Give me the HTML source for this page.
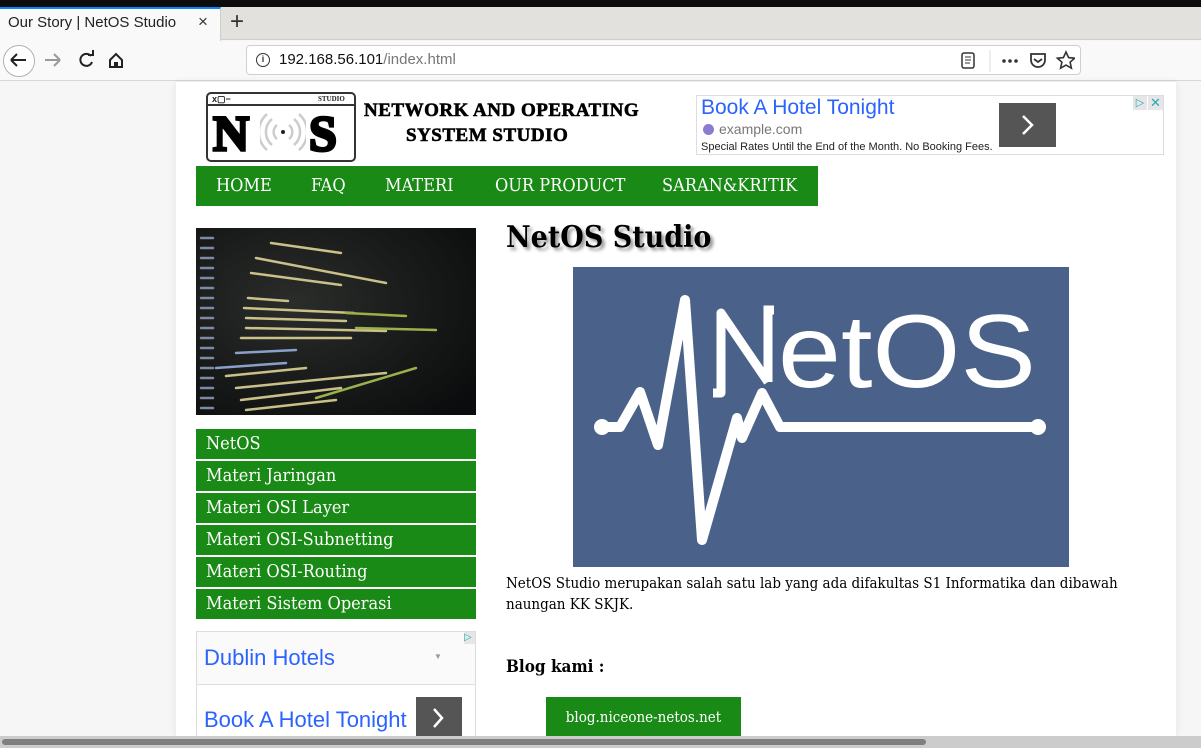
<!DOCTYPE html>
<html><head><meta charset="utf-8">
<style>
*{margin:0;padding:0;box-sizing:border-box}
html,body{width:1201px;height:748px;overflow:hidden;background:#f6f6f6;font-family:"Liberation Sans",sans-serif}
.abs{position:absolute}
.serif{font-family:"DejaVu Serif","Liberation Serif",serif;font-stretch:condensed}
.gbox{background:#1a8a16;color:#fff}
</style></head><body>
<div class="abs" style="left:0;top:0;width:1201px;height:7px;background:#0c0c0d"></div>
<div class="abs" style="left:0;top:7px;width:1201px;height:33px;background:#e3e1de;border-bottom:1px solid #cfcdc9"></div>
<div class="abs" style="left:0;top:7px;width:221px;height:34px;background:#f9f9fa;border-top:2px solid #0a84ff;border-right:1px solid #cfcdc9"></div>
<div class="abs" style="left:8px;top:14px;font-size:15px;color:#222">Our Story | NetOS Studio</div>
<div class="abs" style="left:198px;top:12px;font-size:17px;color:#333">×</div>
<div class="abs" style="left:230px;top:8px;font-size:24px;color:#333">+</div>
<div class="abs" style="left:0;top:41px;width:1201px;height:40px;background:#f9f9fa;border-bottom:1px solid #d7d7db"></div>
<div class="abs" style="left:3px;top:45px;width:32px;height:32px;border:1px solid #b1b1b3;border-radius:50%;background:#fff"></div>
<svg class="abs" style="left:0;top:41px" width="140" height="40"><path d="M11 19h15M11 19l6-6M11 19l6 6" stroke="#222" stroke-width="2" fill="none"/><path d="M45 19h15M60 19l-6-6M60 19l-6 6" stroke="#999" stroke-width="2" fill="none"/><path d="M91 15a6 6 0 1 0 1 6" stroke="#222" stroke-width="2" fill="none"/><path d="M88 14h5v-5" stroke="#222" stroke-width="2" fill="none"/><path d="M110 19l6-6 6 6v7h-12z" stroke="#222" stroke-width="2" fill="none"/><rect x="114" y="21" width="4" height="5" fill="#222"/></svg>
<div class="abs" style="left:246px;top:45px;width:835px;height:30px;background:#fff;border:1px solid #cfcfd3;border-radius:4px"></div>
<div class="abs" style="left:256px;top:53px;width:14px;height:14px;border:1.5px solid #333;border-radius:50%;font-size:9px;text-align:center;line-height:11px;font-weight:bold;color:#333">i</div>
<div class="abs" style="left:279px;top:51px;font-size:15px;color:#111">192.168.56.101<span style="color:#777">/index.html</span></div>
<svg class="abs" style="left:955px;top:48px" width="120" height="26"><rect x="7" y="5" width="12" height="15" rx="2" stroke="#333" stroke-width="1.5" fill="none"/><path d="M10 9h6M10 12h6M10 15h5" stroke="#333"/><path d="M35 2v22" stroke="#ddd"/><circle cx="49" cy="13" r="1.8" fill="#333"/><circle cx="55" cy="13" r="1.8" fill="#333"/><circle cx="61" cy="13" r="1.8" fill="#333"/><path d="M76 6h14v6a7 7 0 0 1-14 0z" stroke="#333" stroke-width="1.8" fill="none"/><path d="M79 11l4 3 4-3" stroke="#333" stroke-width="1.8" fill="none"/><path d="M111 4l2.6 5.6 6 .6-4.5 4 1.3 6-5.4-3.1-5.4 3.1 1.3-6-4.5-4 6-.6z" stroke="#333" stroke-width="1.6" fill="none"/></svg>

<div class="abs" style="left:176px;top:82px;width:1000px;height:654px;background:#fff;box-shadow:0 0 8px rgba(0,0,0,.08)"></div>
<div class="abs" style="left:206px;top:92px;width:150px;height:70px;border:2px solid #333;border-radius:5px;background:#fff"></div>
<div class="abs" style="left:208px;top:104px;width:146px;height:2px;background:#333"></div>
<div class="abs" style="left:212px;top:94px;font-size:9px;font-weight:bold;color:#222">x▢−</div>
<div class="abs" style="left:318px;top:95px;font-size:7px;font-weight:bold;font-family:'Liberation Serif',serif;color:#222">STUDIO</div>
<div class="abs" style="left:213px;top:104px;font-size:50px;font-weight:900;font-family:'Liberation Serif',serif;color:#000;-webkit-text-stroke:3px #000">N</div>
<div class="abs" style="left:309px;top:104px;font-size:50px;font-weight:900;font-family:'Liberation Serif',serif;color:#000;-webkit-text-stroke:3px #000">S</div>
<svg class="abs" style="left:260px;top:110px" width="46" height="44"><circle cx="23" cy="22" r="2" fill="#222"/><path d="M17 15a9 9 0 0 0 0 14M29 15a9 9 0 0 1 0 14M12 9a17 17 0 0 0 0 26M34 9a17 17 0 0 1 0 26M7 4a24 24 0 0 0 0 36M39 4a24 24 0 0 1 0 36" stroke="#ccc" stroke-width="2.5" fill="none"/></svg>
<div class="abs" style="left:364px;top:98px;font-family:'Liberation Serif',serif;font-weight:900;font-size:19px;color:#000;letter-spacing:.5px;line-height:25px;-webkit-text-stroke:.6px #000">NETWORK AND OPERATING<br><span style="padding-left:42px">SYSTEM STUDIO</span></div>
<div class="abs" style="left:696px;top:95px;width:468px;height:60px;border:1px solid #ddd;background:#fff"></div>
<div class="abs" style="left:701px;top:96px;font-size:21px;color:#2b63ff">Book A Hotel Tonight</div>
<div class="abs" style="left:703px;top:124px;width:11px;height:11px;border-radius:50%;background:#8b7ccf"></div>
<div class="abs" style="left:719px;top:121px;font-size:14px;color:#777">example.com</div>
<div class="abs" style="left:701px;top:141px;font-size:11px;color:#222">Special Rates Until the End of the Month. No Booking Fees.</div>
<div class="abs" style="left:999px;top:103px;width:57px;height:44px;background:#555"></div>
<svg class="abs" style="left:999px;top:103px" width="57" height="44"><path d="M24 13l9 9-9 9" stroke="#fff" stroke-width="2.5" fill="none"/></svg>
<div class="abs" style="left:1133px;top:96px;width:14px;height:14px;background:#e6e6e6;color:#2ab;font-size:11px;text-align:center;line-height:14px">▷</div>
<div class="abs" style="left:1148px;top:96px;width:15px;height:14px;background:#e6e6e6;color:#2ab;font-size:13px;text-align:center;line-height:14px">✕</div>
<div class="abs gbox serif" style="left:196px;top:166px;width:622px;height:40px;font-size:18px;line-height:40px;white-space:nowrap">
<span class="abs" style="left:20px">HOME</span><span class="abs" style="left:115px">FAQ</span><span class="abs" style="left:189px">MATERI</span><span class="abs" style="left:299px">OUR PRODUCT</span><span class="abs" style="left:466px">SARAN&amp;KRITIK</span></div>
<svg class="abs" style="left:196px;top:228px" width="280" height="187"><defs><radialGradient id="g" cx=".35" cy=".4" r=".8"><stop offset="0" stop-color="#2a2d2a"/><stop offset="1" stop-color="#0b0c0d"/></radialGradient></defs><rect width="280" height="187" fill="url(#g)"/>
<g stroke-width="2.5" stroke-linecap="round">
<path d="M5 10h12M5 20h12M5 30h12M5 40h12M5 50h12M5 60h12M5 70h12M5 80h12M5 90h12M5 100h12M5 110h12M5 120h12M5 130h12M5 140h12M5 150h12M5 160h12M5 170h12M5 180h12" stroke="#7d8aa6"/>
<path d="M75 15l70 10M60 30l130 25M55 45l90 12M52 70l40 3M48 80l110 5M50 90l100 3M50 100l140 3M45 110l110 0M30 148l80-8M40 160l150-15M45 172l100-12M50 182l90-10" stroke="#c9c08a"/>
<path d="M150 85l60 3M160 100l80 2M120 170l100-30" stroke="#9ab04a"/>
<path d="M40 125l60-3M20 140l70-5" stroke="#8aa0c8"/></g></svg>
<div class="serif" style="position:absolute;left:196px;top:429px;width:280px;font-size:18px;color:#fff">
<div class="gbox" style="height:30px;line-height:30px;padding-left:10px;margin-bottom:2px">NetOS</div>
<div class="gbox" style="height:30px;line-height:30px;padding-left:10px;margin-bottom:2px">Materi Jaringan</div>
<div class="gbox" style="height:30px;line-height:30px;padding-left:10px;margin-bottom:2px">Materi OSI Layer</div>
<div class="gbox" style="height:30px;line-height:30px;padding-left:10px;margin-bottom:2px">Materi OSI-Subnetting</div>
<div class="gbox" style="height:30px;line-height:30px;padding-left:10px;margin-bottom:2px">Materi OSI-Routing</div>
<div class="gbox" style="height:30px;line-height:30px;padding-left:10px">Materi Sistem Operasi</div>
</div>
<div class="abs" style="left:196px;top:631px;width:280px;height:110px;border:1px solid #ddd;background:#fafafa"></div>
<div class="abs" style="left:197px;top:684px;width:278px;height:1px;background:#ddd"></div>
<div class="abs" style="left:197px;top:685px;width:278px;height:60px;background:#fff"></div>
<div class="abs" style="left:204px;top:645px;font-size:22px;color:#2b63ff">Dublin Hotels</div>
<div class="abs" style="left:434px;top:652px;font-size:8px;color:#999">▼</div>
<div class="abs" style="left:464px;top:632px;width:11px;height:12px;background:#e6e6e6;color:#2ab;font-size:10px;line-height:12px">▷</div>
<div class="abs" style="left:204px;top:707px;font-size:22px;color:#2b63ff">Book A Hotel Tonight</div>
<div class="abs" style="left:416px;top:697px;width:46px;height:45px;background:#555"></div>
<svg class="abs" style="left:416px;top:697px" width="46" height="40"><path d="M18 12l8 9-8 9" stroke="#fff" stroke-width="2.5" fill="none"/></svg>
<div class="abs serif" style="left:506px;top:220px;font-size:30px;font-weight:bold;color:#000;text-shadow:3px 3px 3px #999">NetOS Studio</div>
<svg class="abs" style="left:573px;top:267px" width="496" height="300"><rect width="496" height="300" fill="#4a6189"/>
<polyline points="29,160 47,160 67,125 85,178 112,33 129,273 164,151 169,171 189,126 207,160 465,160" stroke="#fff" stroke-width="10" fill="none" stroke-linejoin="round" stroke-linecap="round"/>
<circle cx="29" cy="160" r="8" fill="#fff"/><circle cx="465" cy="160" r="8" fill="#fff"/>
<path d="M148 115v11h-8M148 115v-69l47 69" stroke="#fff" stroke-width="9" fill="none" stroke-linejoin="round"/><path d="M195 115v-72h6" stroke="#fff" stroke-width="9" fill="none"/>
<text x="205" y="120" font-family="Liberation Sans,sans-serif" font-size="104" fill="#fff" textLength="258" lengthAdjust="spacingAndGlyphs">etOS</text></svg>
<div class="abs serif" style="left:506px;top:573px;width:640px;font-size:15px;line-height:21px;color:#000">NetOS Studio merupakan salah satu lab yang ada difakultas S1 Informatika dan dibawah naungan KK SKJK.</div>
<div class="abs serif" style="left:506px;top:657px;font-size:17px;font-weight:bold;color:#000">Blog kami :</div>
<div class="abs gbox serif" style="left:546px;top:697px;width:195px;height:40px;font-size:15px;line-height:40px;text-align:center">blog.niceone-netos.net</div>
<div class="abs" style="left:0;top:736px;width:1201px;height:12px;background:#ccc"></div>
<div class="abs" style="left:2px;top:739px;width:924px;height:6px;background:#7f7f7f;border-radius:3px"></div>
</body></html>
